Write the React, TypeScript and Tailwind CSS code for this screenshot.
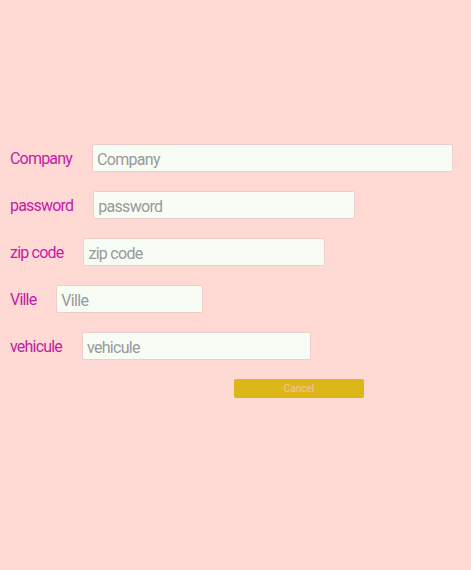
const fields = [
    { label: "Company", width: "w-[361px]" },
    { label: "password", width: "w-[262px]" },
    { label: "zip code", width: "w-[242px]" },
    { label: "Ville", width: "w-[147px]" },
    { label: "vehicule", width: "w-[229px]" },
]

const App = () => {
    return (
        <div className="min-h-[570px] w-full bg-[#ffd9d4] pt-[144px] pl-[10px] font-['Roboto',sans-serif]">
            <form className="flex flex-col gap-[19px]">
                {fields.map((f) => (
                    <div key={f.label} className="flex flex-row items-center h-[28px]">
                        <label className="text-[16px] tracking-[-0.8px] text-[#c41ca6] pt-[2px]">{f.label}</label>
                        <input
                            type="text"
                            placeholder={f.label}
                            className={`ml-5 h-[28px] ${f.width} bg-[#f7fdf5] border border-[#eccfca] rounded-[2px] px-[4px] pt-[2px] text-[16px] tracking-[-0.7px] text-[#555] placeholder:text-[#999] outline-none`}
                        />
                    </div>
                ))}
                <div className="flex flex-row">
                    <button type="button" className="ml-[224px] w-[130px] h-[19px] bg-[#ddb617] rounded-[2px] text-[10px] text-[#f3c4a8] leading-none">
                        Cancel
                    </button>
                </div>
            </form>
        </div>
    )
}

export default App
